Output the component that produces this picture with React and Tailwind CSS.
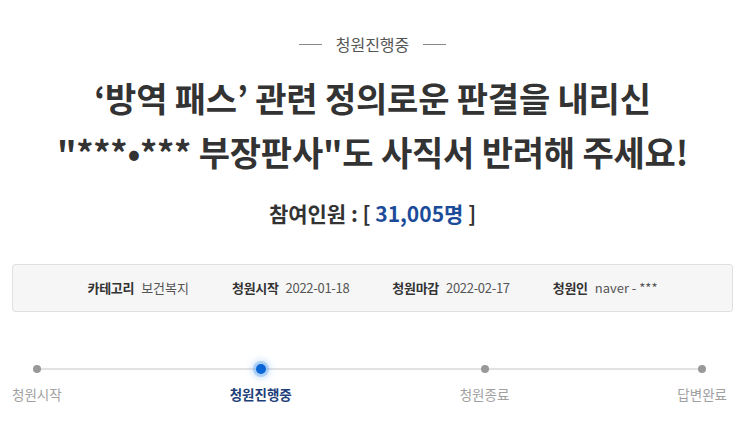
export default function App() {
  const steps = [
    { label: "청원시작", active: false },
    { label: "청원진행중", active: true },
    { label: "청원종료", active: false },
    { label: "답변완료", active: false },
  ];
  return (
    <div
      className="w-[745px] h-[422px] bg-white overflow-hidden"
      style={{ fontFamily: '"Noto Sans CJK KR", "Noto Sans", sans-serif' }}
    >
      <div className="flex items-center justify-center gap-[14px] pt-[33px] h-[22px] box-content">
        <div className="w-[23px] h-px bg-[#888]" />
        <div className="text-[16px] leading-[22px] text-[#555]">청원진행중</div>
        <div className="w-[23px] h-px bg-[#888]" />
      </div>
      <div className="mt-[16px] text-center text-[34px] leading-[54px] font-bold text-[#333] tracking-[-0.2px]">
        <div>‘방역 패스’ 관련 정의로운 판결을 내리신</div>
        <div>"***•*** 부장판사"도 사직서 반려해 주세요!</div>
      </div>
      <div className="mt-[20px] text-center text-[21px] leading-[28px] font-bold text-[#333]">
        참여인원 : [ <span className="text-[#1c4c99]">31,005명</span> ]
      </div>
      <div className="mx-[12px] mt-[37px] h-[48px] border border-[#e0e0e0] rounded-[3px] bg-[#f6f6f6] flex items-center justify-center gap-[43px] text-[13px] text-[#333]">
        <div className="flex items-center gap-[7px]">
          <span className="font-bold tracking-[-0.3px]">카테고리</span>
          <span className="text-[#555]">보건복지</span>
        </div>
        <div className="flex items-center gap-[7px]">
          <span className="font-bold tracking-[-0.3px]">청원시작</span>
          <span className="text-[#555] tracking-[-0.3px]">2022-01-18</span>
        </div>
        <div className="flex items-center gap-[7px]">
          <span className="font-bold tracking-[-0.3px]">청원마감</span>
          <span className="text-[#555] tracking-[-0.3px]">2022-02-17</span>
        </div>
        <div className="flex items-center gap-[7px]">
          <span className="font-bold tracking-[-0.3px]">청원인</span>
          <span className="text-[#555]">naver - ***</span>
        </div>
      </div>
      <div className="relative mx-[12px] mt-[42px] w-[715px]">
        <div className="absolute left-[27px] right-[27px] top-[14px] h-[2px] bg-[#e2e2e2]" />
        <div className="relative flex justify-between">
          {steps.map((s) => (
            <div key={s.label} className="flex flex-col items-center">
              <div className="h-[30px] flex items-center justify-center">
                {s.active ? (
                  <div className="w-[10px] h-[10px] rounded-full bg-[#0a66d6] shadow-[0_0_0_3px_rgba(90,160,240,0.35),0_0_7px_4px_rgba(90,160,240,0.35)]" />
                ) : (
                  <div className="w-[8px] h-[8px] rounded-full bg-[#999]" />
                )}
              </div>
              <div
                className={
                  s.active
                    ? "text-[13.5px] leading-[20px] font-bold text-[#1e3f7a]"
                    : "text-[13.5px] leading-[20px] text-[#a0a0a0]"
                }
              >
                {s.label}
              </div>
            </div>
          ))}
        </div>
      </div>
    </div>
  );
}
